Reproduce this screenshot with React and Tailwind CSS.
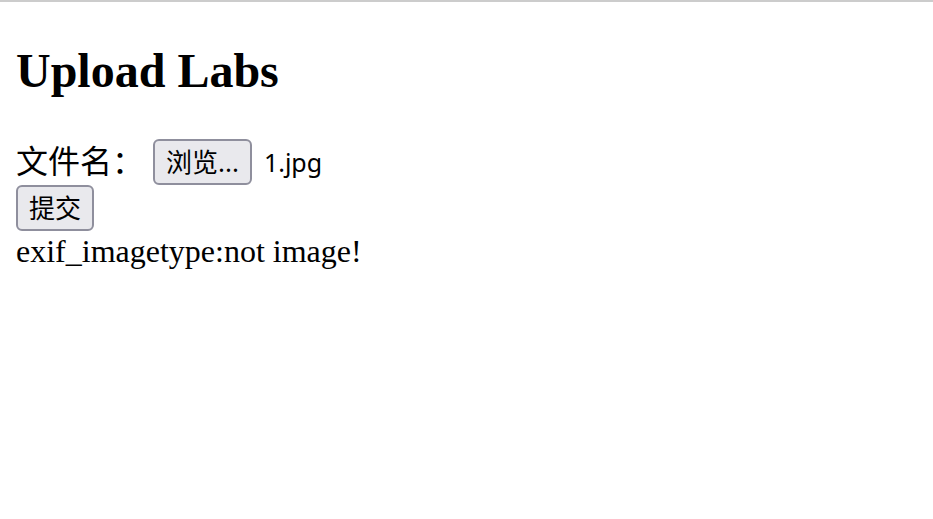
import React from "react";

const serif = "font-['Liberation_Serif','Noto_Sans_CJK_SC',serif]";
const sans = "font-['Noto_Sans','Noto_Sans_CJK_SC',sans-serif]";

export default function App() {
    return (
        <div className="min-h-[519px] w-full bg-white border-t-2 border-[#cccccc] text-black">
            <div className="px-4">
                <h1
                    className={`${serif} mt-[41px] mb-[41px] text-[48px] leading-[55px] font-bold`}
                >
                    Upload Labs
                </h1>

                <form onSubmit={(e) => e.preventDefault()}>
                    <div className="flex items-center h-[46px]">
                        <span className={`${serif} text-[32px] leading-[37px]`}>
                            文件名：
                        </span>
                        <button
                            type="button"
                            className={`${sans} ml-[9px] h-[46px] px-[11px] flex items-center text-[26px] leading-none bg-[#e9e9ed] border-2 border-[#8f8f9d] rounded-[6px]`}
                        >
                            浏览...
                        </button>
                        <span className={`${sans} ml-[12px] text-[25px] leading-none`}>
                            1.jpg
                        </span>
                    </div>
                    <button
                        type="submit"
                        className={`${sans} h-[46px] px-[11px] flex items-center text-[26px] leading-none bg-[#e9e9ed] border-2 border-[#8f8f9d] rounded-[6px]`}
                    >
                        提交
                    </button>
                </form>

                <p className={`${serif} pt-[2px] text-[32px] leading-[37px]`}>
                    exif_imagetype:not image!
                </p>
            </div>
        </div>
    );
}
